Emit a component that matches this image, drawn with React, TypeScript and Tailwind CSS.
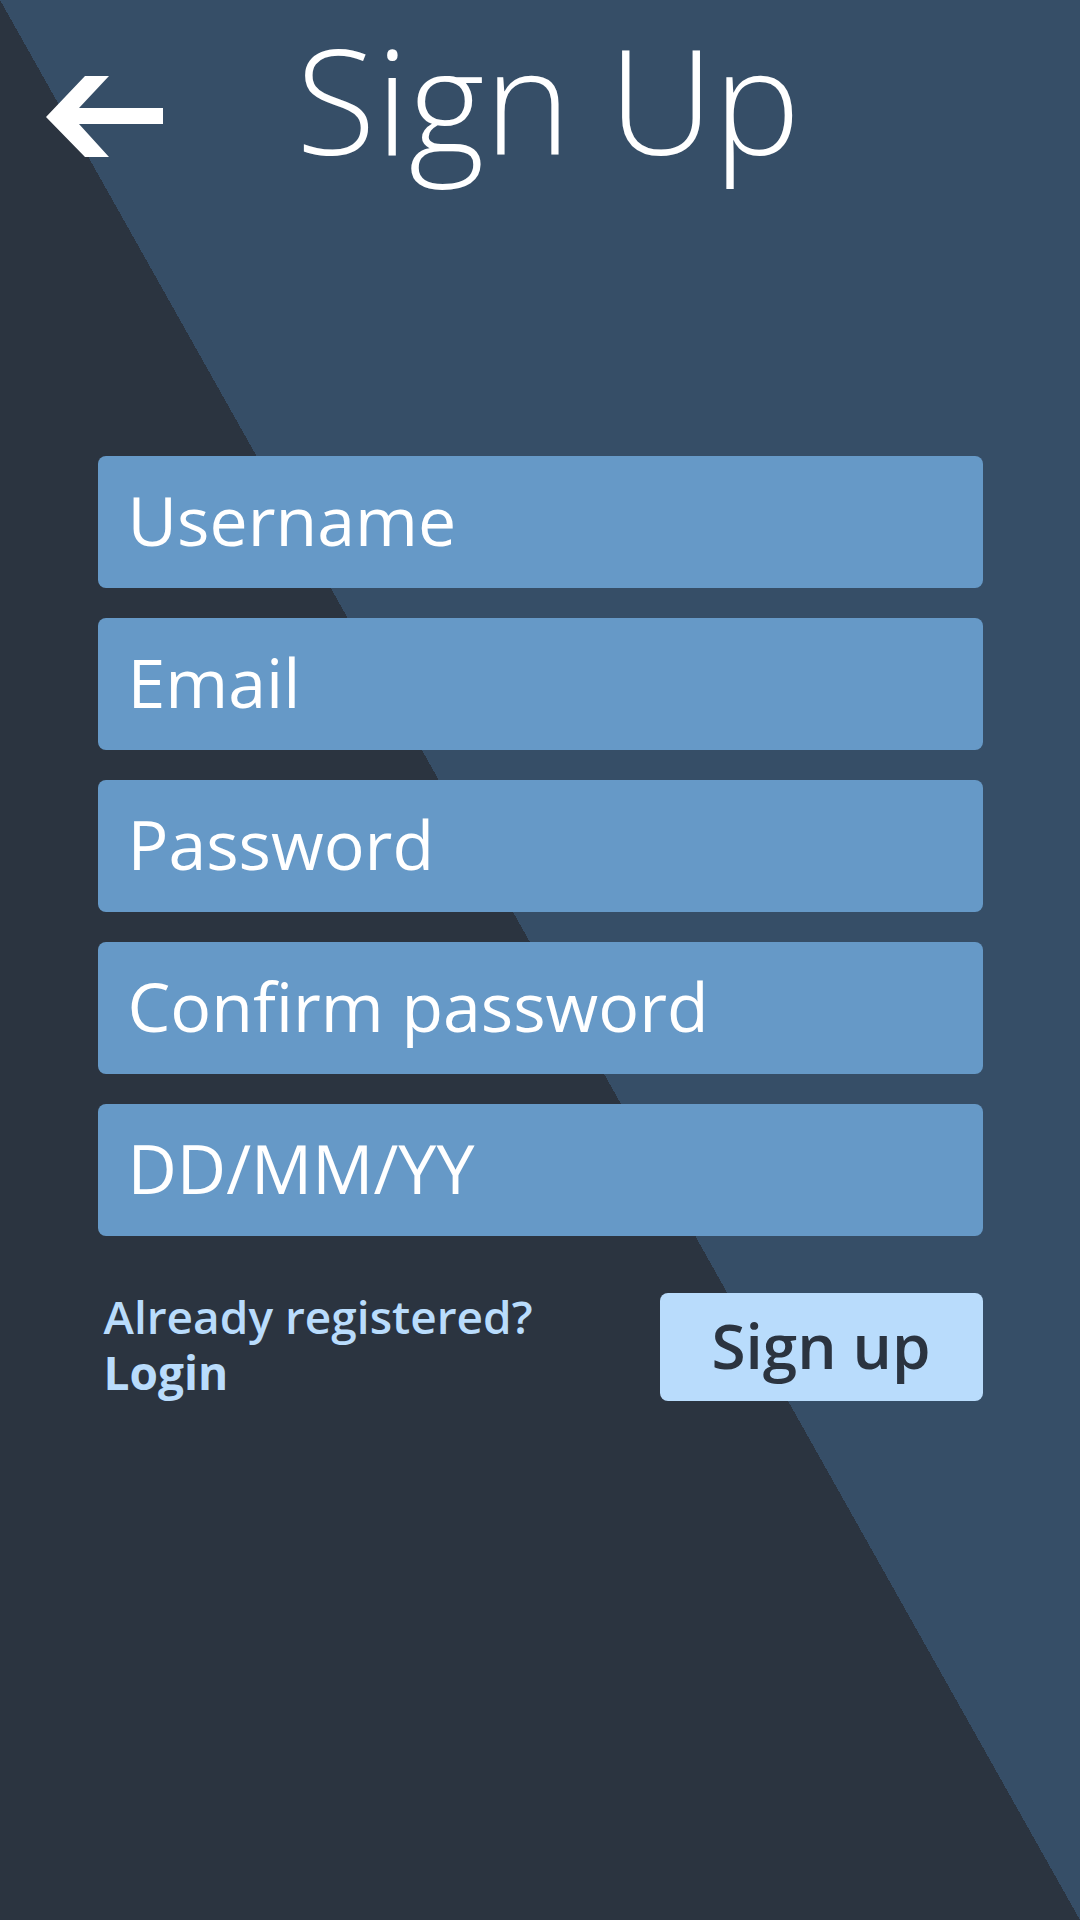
import React from 'react';

const fields = ['Username', 'Email', 'Password', 'Confirm password', 'DD/MM/YY'];

const BackArrow = () => (
    <svg width="117" height="81" viewBox="0 0 117 81" className="shrink-0">
        <polygon
            points="0,41 39,0 63,0 33,32 117,32 117,48 33,48 63,81 39,81"
            fill="#ffffff"
        />
    </svg>
);

const App = () => {
    return (
        <div className="min-h-[1920px] w-full bg-[linear-gradient(to_top_right,#2b3440_50%,#364e67_50%)] font-['Open_Sans',sans-serif]">
            <header className="flex items-start pt-[26px]">
                <div className="ml-[46px] mt-[50px]">
                    <BackArrow />
                </div>
                <h1 className="ml-[133px] text-[146px] leading-none font-light text-white">Sign Up</h1>
            </header>

            <div className="mx-auto mt-[284px] w-[885px]">
                <div className="flex flex-col gap-[30px]">
                    {fields.map((field) => (
                        <div
                            key={field}
                            className="flex h-[132px] items-center rounded-[8px] bg-[#6699c7] pb-[4px] pl-[30px] text-[68px] text-white"
                        >
                            {field}
                        </div>
                    ))}
                </div>

                <div className="mt-[57px] flex items-start justify-between">
                    <div className="ml-[6px] mt-[-5px] text-[46px] leading-[56px] text-[#b9dcfc]">
                        <p className="font-semibold">Already registered?</p>
                        <p className="font-bold">Login</p>
                    </div>
                    <button className="flex h-[108px] w-[323px] items-center justify-center rounded-[8px] bg-[#b9dcfc] pb-[3px] text-[62px] font-semibold text-[#2b3440]">
                        Sign up
                    </button>
                </div>
            </div>
        </div>
    );
};

export default App;
